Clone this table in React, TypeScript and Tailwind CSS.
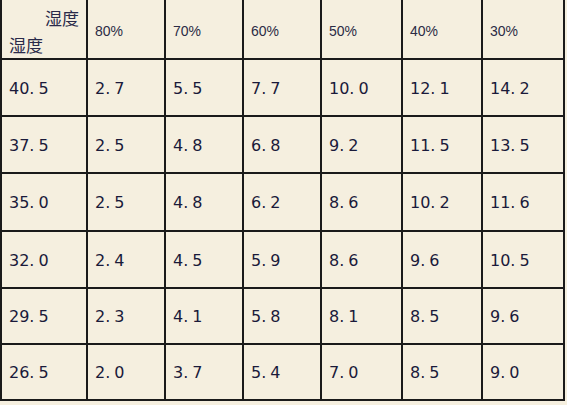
import React from "react";

const headers = ["80%", "70%", "60%", "50%", "40%", "30%"];
const rows: string[][] = [
  ["40.5", "2.7", "5.5", "7.7", "10.0", "12.1", "14.2"],
  ["37.5", "2.5", "4.8", "6.8", "9.2", "11.5", "13.5"],
  ["35.0", "2.5", "4.8", "6.2", "8.6", "10.2", "11.6"],
  ["32.0", "2.4", "4.5", "5.9", "8.6", "9.6", "10.5"],
  ["29.5", "2.3", "4.1", "5.8", "8.1", "8.5", "9.6"],
  ["26.5", "2.0", "3.7", "5.4", "7.0", "8.5", "9.0"],
];

function Num({ v }: { v: string }) {
  const [a, b] = v.split(".");
  return (
    <span>
      {a}
      <span className="mr-[4px]">.</span>
      {b}
    </span>
  );
}

export default function App() {
  return (
    <div className="w-[567px] h-[405px] bg-[#f5efdf] overflow-hidden">
      <div
        className="grid w-[565px] bg-[#1a1a1a] gap-[2px] border-x-2 border-b-2 border-[#1a1a1a] grid-cols-[84px_76px_76px_76px_79px_78px_80px] grid-rows-[58px_55px_55px_56px_55px_54px_54px]"
      >
        <div className="bg-[#f5efdf] relative text-[17px] text-[#2a2a4a] font-['Noto_Sans_CJK_SC',sans-serif] leading-none">
          <span className="absolute right-[7px] top-[9px]">湿度</span>
          <span className="absolute left-[7px] top-[36px]">湿度</span>
        </div>
        {headers.map((h) => (
          <div
            key={h}
            className="bg-[#f5efdf] flex items-center pl-[7px] pt-[5px] text-[14px] text-[#2b2b45] font-['Liberation_Sans',sans-serif]"
          >
            {h}
          </div>
        ))}
        {rows.map((r, i) =>
          r.map((c, j) => (
            <div
              key={`${i}-${j}`}
              className="bg-[#f5efdf] flex items-center pl-[7px] pt-[2px] text-[16px] text-[#1a1a3a] font-['DejaVu_Sans',sans-serif]"
            >
              <Num v={c} />
            </div>
          ))
        )}
      </div>
    </div>
  );
}
